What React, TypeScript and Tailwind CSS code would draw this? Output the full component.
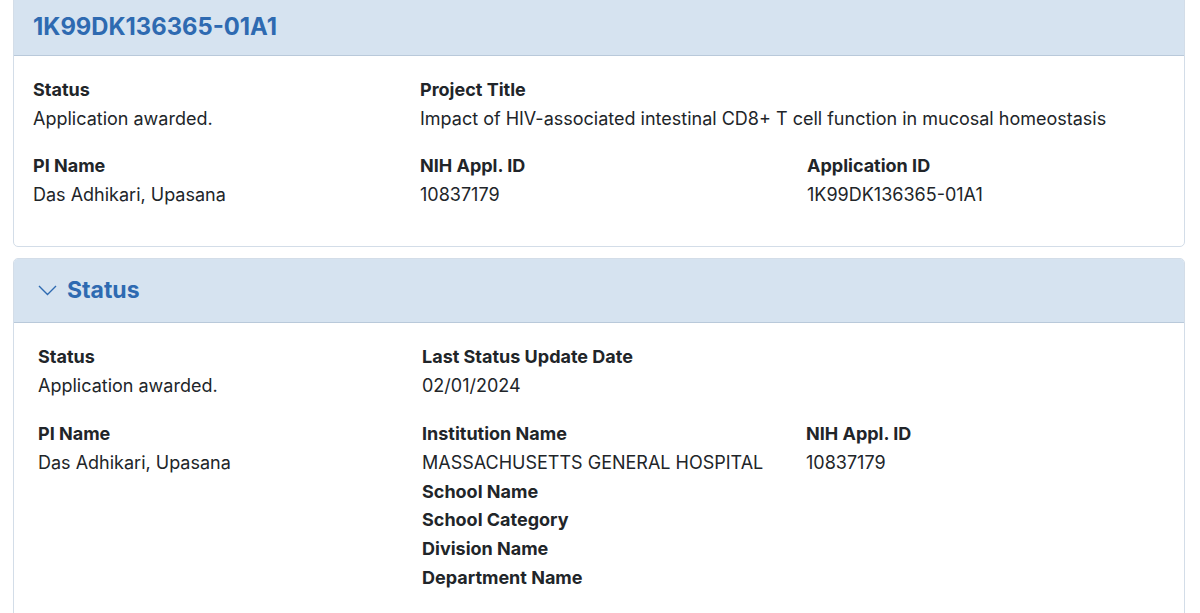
const font = { fontFamily: "Inter, 'Noto Sans', Arial, sans-serif" };

function Field({ label, value }: { label: string; value?: string }) {
  return (
    <div>
      <div className="font-bold text-[#212529]">{label}</div>
      {value && <div className="text-[#212529]">{value}</div>}
    </div>
  );
}

export default function App() {
  return (
    <div
      className="min-h-screen bg-white px-[13px] pr-[15px] text-[18px] leading-[28.7px]"
      style={font}
    >
      <div className="-mt-[5px] overflow-hidden rounded-[5px] border border-[#d3dde8] bg-white">
        <div className="flex h-[60px] items-center border-b border-[#b9c9da] bg-[#d6e3f0] px-[19px] pt-[4px]">
          <h2 className="text-[23.8px] font-bold text-[#2e6ab1]">
            1K99DK136365-01A1
          </h2>
        </div>
        <div className="px-[19px] pb-[17px] pt-[20px]">
          <div className="grid grid-cols-[387px_387px_1fr]">
            <div className="mb-[19px]">
              <Field label="Status" value="Application awarded." />
            </div>
            <div className="col-span-2 mb-[19px]">
              <Field
                label="Project Title"
                value="Impact of HIV-associated intestinal CD8+ T cell function in mucosal homeostasis"
              />
            </div>
            <div className="mb-[19px]">
              <Field label="PI Name" value="Das Adhikari, Upasana" />
            </div>
            <div className="mb-[19px]">
              <Field label="NIH Appl. ID" value="10837179" />
            </div>
            <div className="mb-[19px]">
              <Field label="Application ID" value="1K99DK136365-01A1" />
            </div>
          </div>
        </div>
      </div>

      <div className="mt-[11px] overflow-hidden rounded-[5px] border border-[#d3dde8] bg-white">
        <div className="flex h-[64px] items-center gap-[10px] border-b border-[#b9c9da] bg-[#d6e3f0] px-[24px]">
          <svg width="19" height="11" viewBox="0 0 19 11" className="mt-[1px]">
            <polyline
              points="1,1 9.5,9.5 18,1"
              fill="none"
              stroke="#2e6ab1"
              strokeWidth="1.4"
            />
          </svg>
          <h2 className="text-[23px] font-bold text-[#2e6ab1]">Status</h2>
        </div>
        <div className="px-[24px] pb-[40px] pt-[20px]">
          <div className="grid grid-cols-[384px_384px_1fr]">
            <div className="mb-[20px]">
              <Field label="Status" value="Application awarded." />
            </div>
            <div className="col-span-2 mb-[20px]">
              <Field label="Last Status Update Date" value="02/01/2024" />
            </div>
            <div>
              <Field label="PI Name" value="Das Adhikari, Upasana" />
            </div>
            <div>
              <Field
                label="Institution Name"
                value="MASSACHUSETTS GENERAL HOSPITAL"
              />
              <Field label="School Name" />
              <Field label="School Category" />
              <Field label="Division Name" />
              <Field label="Department Name" />
            </div>
            <div>
              <Field label="NIH Appl. ID" value="10837179" />
            </div>
          </div>
        </div>
      </div>
    </div>
  );
}
